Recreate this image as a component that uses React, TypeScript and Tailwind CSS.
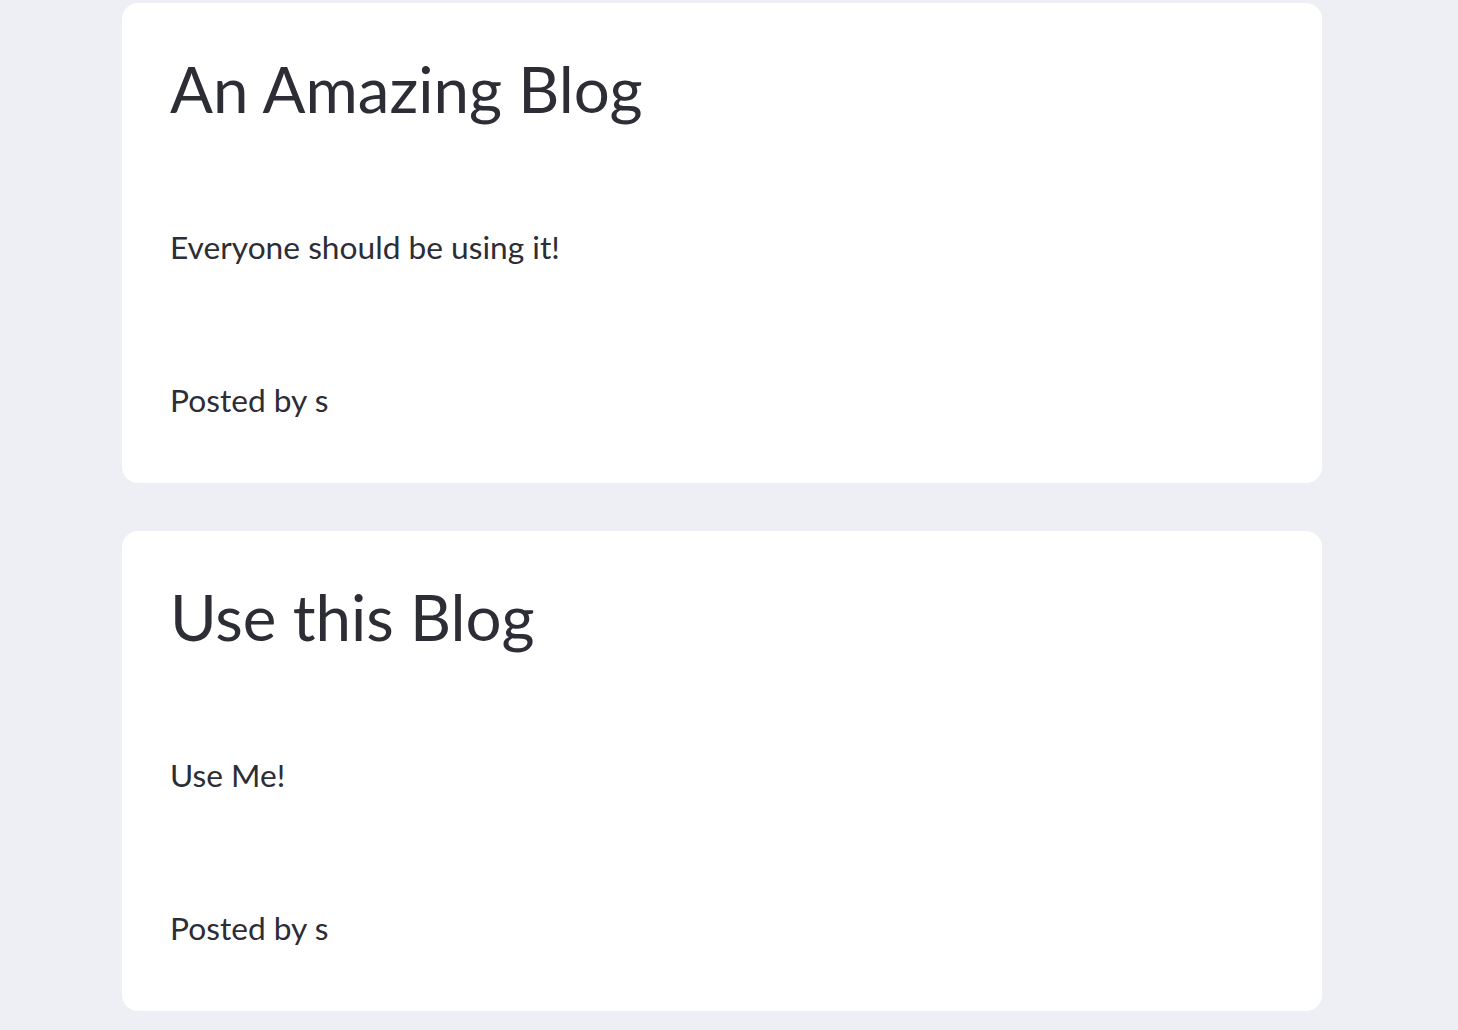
import React from "react";

const posts = [
  { title: "An Amazing Blog", body: "Everyone should be using it!", author: "s" },
  { title: "Use this Blog", body: "Use Me!", author: "s" },
];

export default function App() {
  return (
    <div className="min-h-screen bg-[#eeeff5] pt-[3px]" style={{ fontFamily: "Lato, 'Noto Sans', sans-serif" }}>
      <div className="flex w-[1200px] flex-col gap-12 text-[#2c2d35]" style={{ marginLeft: 122 }}>
        {posts.map((p) => (
          <div key={p.title} className="flex h-[480px] flex-col rounded-2xl bg-white px-12">
            <h1 className="mt-[47px] text-[63.6px] leading-[77px]">{p.title}</h1>
            <p className="mt-[101px] text-[31.7px] leading-[38px]">{p.body}</p>
            <p className="mt-[115px] text-[31.7px] leading-[38px]">Posted by {p.author}</p>
          </div>
        ))}
      </div>
    </div>
  );
}
